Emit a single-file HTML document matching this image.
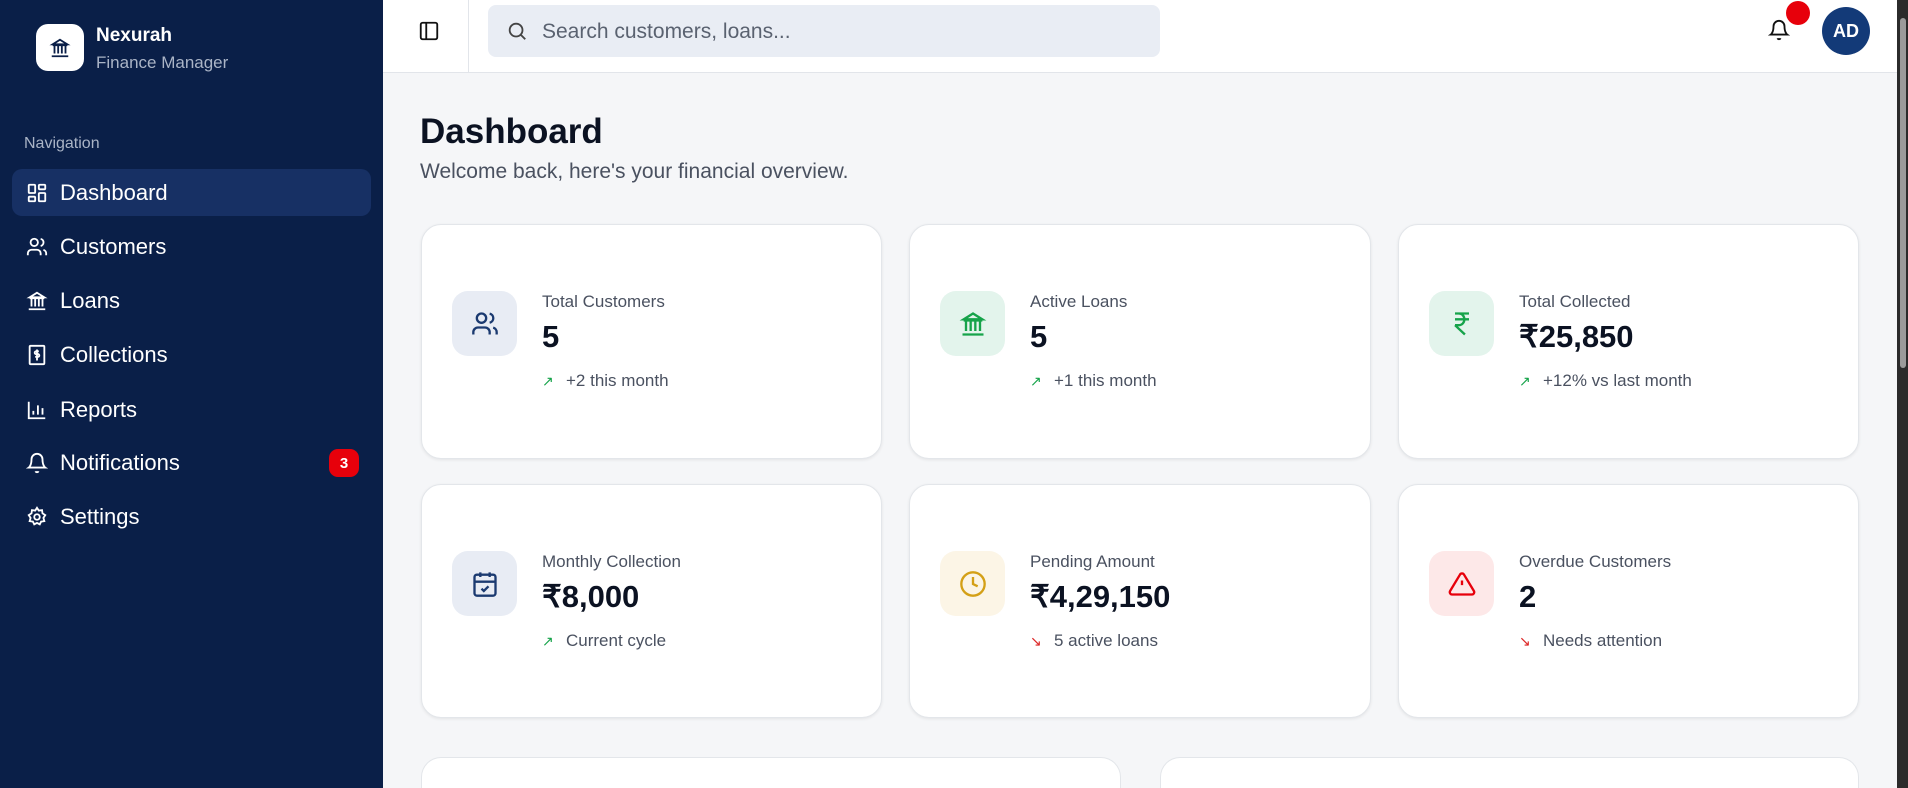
<!DOCTYPE html>
<html><head><meta charset="utf-8"><style>
*{box-sizing:border-box;margin:0;padding:0}
html{width:1908px;height:788px;overflow:hidden}
body{width:1908px;height:788px;overflow:hidden;font-family:"Liberation Sans",Arial,sans-serif;background:#f5f6f8;position:relative}
.sb{position:absolute;left:0;top:0;width:383px;height:788px;background:#0a1f48;color:#fff}
.logo{position:absolute;left:36px;top:24px;width:48px;height:47px;background:#fff;border-radius:12px;display:flex;align-items:center;justify-content:center}
.bt{position:absolute;left:96px;top:25px;font-size:19px;font-weight:bold}
.bs{position:absolute;left:96px;top:53px;font-size:17px;color:#aab4c6}
.navl{position:absolute;left:24px;top:135px;font-size:16px;color:#aab4c6}
.it{position:absolute;left:12px;width:359px;height:47px;border-radius:10px;display:flex;align-items:center;font-size:22px;color:#fff}
.it svg{position:absolute;left:14px}
.it span{position:absolute;left:48px}
.it.act{background:#173064}
.badge{position:absolute;left:329px;width:30px;height:28px;border-radius:9px;background:#e7000b;font-size:15px;font-weight:bold;display:flex;align-items:center;justify-content:center}
.hd{position:absolute;left:383px;top:0;width:1514px;height:73px;background:#fff;border-bottom:1px solid #e2e5ea}
.search{position:absolute;left:488px;top:5px;width:672px;height:52px;background:#e9edf4;border-radius:8px}
.search span{position:absolute;left:54px;top:15px;font-size:21px;color:#5a6270}
.card{position:absolute;background:#fff;border:1px solid #e3e6ea;border-radius:20px;box-shadow:0 1px 3px rgba(0,0,0,.08)}
.ib{position:absolute;left:30px;top:66px;width:65px;height:65px;border-radius:16px;display:flex;align-items:center;justify-content:center}
.lb{position:absolute;left:120px;top:67px;font-size:17px;color:#4a5160}
.vl{position:absolute;left:120px;top:94px;font-size:31px;font-weight:bold;color:#0b1222}
.sub{position:absolute;left:120px;top:146px;font-size:17px;color:#4a5160}
.sub b{font-weight:normal;display:inline-block;width:24px;font-size:14px}
.bc{position:absolute;top:757px;height:31px;background:#fff;border:1px solid #e3e6ea;border-bottom:none;border-radius:20px 20px 0 0}
</style></head><body>
<div class="sb">
 <div class="logo"><svg width="22" height="22" viewBox="0 0 24 24" fill="none" stroke="#0a1f48" stroke-width="2"><path d="M3 21h18M4 9h16M12 3l8 5H4z M6 10v8M10 10v8M14 10v8M18 10v8"/></svg></div>
 <div class="bt">Nexurah</div><div class="bs">Finance Manager</div>
 <div class="navl">Navigation</div>
 <div class="it act" style="top:169px"><svg width="22" height="22" viewBox="0 0 24 24" fill="none" stroke="#fff" stroke-width="2"><rect x="3" y="3" width="7" height="9" rx="1"/><rect x="14" y="3" width="7" height="5" rx="1"/><rect x="14" y="12" width="7" height="9" rx="1"/><rect x="3" y="16" width="7" height="5" rx="1"/></svg><span>Dashboard</span></div>
 <div class="it" style="top:223px"><svg width="22" height="22" viewBox="0 0 24 24" fill="none" stroke="#fff" stroke-width="2"><circle cx="9" cy="7" r="4"/><path d="M2 21v-2a4 4 0 0 1 4-4h6a4 4 0 0 1 4 4v2M16 3.1a4 4 0 0 1 0 7.8M22 21v-2a4 4 0 0 0-3-3.9"/></svg><span>Customers</span></div>
 <div class="it" style="top:277px"><svg width="22" height="22" viewBox="0 0 24 24" fill="none" stroke="#fff" stroke-width="2"><path d="M3 21h18M4 9h16M12 3l8 5H4z M6 10v8M10 10v8M14 10v8M18 10v8"/></svg><span>Loans</span></div>
 <div class="it" style="top:331px"><svg width="22" height="22" viewBox="0 0 24 24" fill="none" stroke="#fff" stroke-width="2"><rect x="4" y="2" width="16" height="20" rx="1"/><path d="M14 8h-3a1.5 1.5 0 0 0 0 3h2a1.5 1.5 0 0 1 0 3h-3M12 6v12"/></svg><span>Collections</span></div>
 <div class="it" style="top:386px"><svg width="22" height="22" viewBox="0 0 24 24" fill="none" stroke="#fff" stroke-width="2"><path d="M3 3v18h18M8 17v-4M13 17V7M18 17v-7"/></svg><span>Reports</span></div>
 <div class="it" style="top:439px"><svg width="22" height="22" viewBox="0 0 24 24" fill="none" stroke="#fff" stroke-width="2"><path d="M6 8a6 6 0 0 1 12 0c0 7 3 9 3 9H3s3-2 3-9M10.3 21a1.9 1.9 0 0 0 3.4 0"/></svg><span>Notifications</span></div>
 <div class="badge" style="top:449px">3</div>
 <div class="it" style="top:493px"><svg width="22" height="22" viewBox="0 0 24 24" fill="none" stroke="#fff" stroke-width="2"><circle cx="12" cy="12" r="3"/><path d="M12 2l2 3 3.5-.5.5 3.5 3 2-2 3 1 3.5-3.5.5-1.5 3-3-1.5-3 1.5-1.5-3-3.5-.5 1-3.5-2-3 3-2 .5-3.5L10 5z"/></svg><span>Settings</span></div>
</div>
<div class="hd"></div>
<svg style="position:absolute;left:418px;top:20px" width="22" height="22" viewBox="0 0 24 24" fill="none" stroke="#111" stroke-width="2"><rect x="3" y="3" width="18" height="18" rx="2"/><path d="M9 3v18"/></svg>
<div style="position:absolute;left:468px;top:0;width:1px;height:73px;background:#e2e5ea"></div>
<div class="search"><svg style="position:absolute;left:18px;top:15px" width="22" height="22" viewBox="0 0 24 24" fill="none" stroke="#444" stroke-width="2"><circle cx="11" cy="11" r="7"/><path d="M21 21l-4.5-4.5"/></svg><span>Search customers, loans...</span></div>
<svg style="position:absolute;left:1768px;top:18px" width="22" height="24" viewBox="0 0 24 24" fill="none" stroke="#111" stroke-width="2"><path d="M6 8a6 6 0 0 1 12 0c0 7 3 9 3 9H3s3-2 3-9M10.3 21a1.9 1.9 0 0 0 3.4 0"/></svg>
<div style="position:absolute;left:1786px;top:1px;width:24px;height:24px;border-radius:50%;background:#e7000b"></div>
<div style="position:absolute;left:1822px;top:7px;width:48px;height:48px;border-radius:50%;background:#133a78;color:#fff;font-weight:bold;font-size:18px;display:flex;align-items:center;justify-content:center">AD</div>
<div style="position:absolute;left:1897px;top:0;width:11px;height:788px;background:#2b2b2b"><div style="position:absolute;left:3px;top:18px;width:6px;height:350px;background:#9b9b9b;border-radius:3px"></div></div>
<div style="position:absolute;left:420px;top:112px;font-size:35px;font-weight:bold;color:#0b1222">Dashboard</div>
<div style="position:absolute;left:420px;top:160px;font-size:21px;color:#4a5160">Welcome back, here's your financial overview.</div>

<div class="card" style="left:421px;top:224px;width:461px;height:235px">
 <div class="ib" style="background:#e8ecf4"><svg width="28" height="28" viewBox="0 0 24 24" fill="none" stroke="#1b3a70" stroke-width="2"><circle cx="9" cy="7" r="4"/><path d="M2 21v-2a4 4 0 0 1 4-4h6a4 4 0 0 1 4 4v2M16 3.1a4 4 0 0 1 0 7.8M22 21v-2a4 4 0 0 0-3-3.9"/></svg></div>
 <div class="lb">Total Customers</div><div class="vl">5</div><div class="sub"><b style="color:#16a34a">↗</b>+2 this month</div></div>
<div class="card" style="left:909px;top:224px;width:462px;height:235px">
 <div class="ib" style="background:#e3f4ec"><svg width="28" height="28" viewBox="0 0 24 24" fill="none" stroke="#16a34a" stroke-width="2"><path d="M3 21h18M4 9h16M12 3l8 5H4z M6 10v8M10 10v8M14 10v8M18 10v8"/></svg></div>
 <div class="lb">Active Loans</div><div class="vl">5</div><div class="sub"><b style="color:#16a34a">↗</b>+1 this month</div></div>
<div class="card" style="left:1398px;top:224px;width:461px;height:235px">
 <div class="ib" style="background:#e3f4ec"><svg width="28" height="28" viewBox="0 0 24 24" fill="none" stroke="#16a34a" stroke-width="2"><path d="M6 3h12M6 8h12M6 13l8.5 8M6 13h3M9 13c6.7 0 6.7-10 0-10"/></svg></div>
 <div class="lb">Total Collected</div><div class="vl">₹25,850</div><div class="sub"><b style="color:#16a34a">↗</b>+12% vs last month</div></div>

<div class="card" style="left:421px;top:484px;width:461px;height:234px">
 <div class="ib" style="background:#e8ecf4"><svg width="28" height="28" viewBox="0 0 24 24" fill="none" stroke="#1b3a70" stroke-width="2"><rect x="3" y="4" width="18" height="18" rx="2"/><path d="M8 2v4M16 2v4M3 10h18M9 16l2 2 4-4"/></svg></div>
 <div class="lb">Monthly Collection</div><div class="vl">₹8,000</div><div class="sub"><b style="color:#16a34a">↗</b>Current cycle</div></div>
<div class="card" style="left:909px;top:484px;width:462px;height:234px">
 <div class="ib" style="background:#fcf5e6"><svg width="28" height="28" viewBox="0 0 24 24" fill="none" stroke="#d4a017" stroke-width="2"><circle cx="12" cy="12" r="10"/><path d="M12 6v6l4 2"/></svg></div>
 <div class="lb">Pending Amount</div><div class="vl">₹4,29,150</div><div class="sub"><b style="color:#dc2626">↘</b>5 active loans</div></div>
<div class="card" style="left:1398px;top:484px;width:461px;height:234px">
 <div class="ib" style="background:#fde8e8"><svg width="28" height="28" viewBox="0 0 24 24" fill="none" stroke="#e7000b" stroke-width="2"><path d="M10.3 3.9L1.8 18a2 2 0 0 0 1.7 3h17a2 2 0 0 0 1.7-3L13.7 3.9a2 2 0 0 0-3.4 0zM12 9v4M12 17h.01"/></svg></div>
 <div class="lb">Overdue Customers</div><div class="vl">2</div><div class="sub"><b style="color:#dc2626">↘</b>Needs attention</div></div>

<div class="bc" style="left:421px;width:700px"></div>
<div class="bc" style="left:1160px;width:699px"></div>
</body></html>
